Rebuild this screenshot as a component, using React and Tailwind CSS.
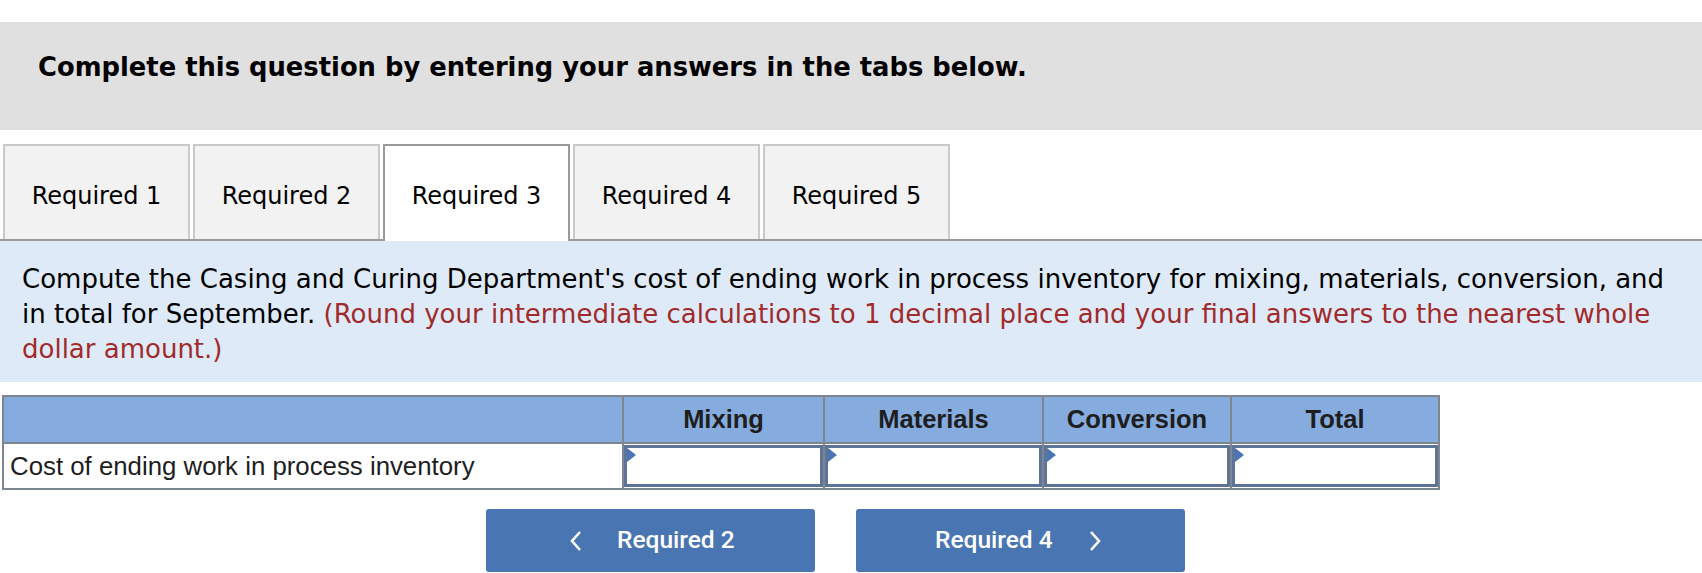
import React from 'react';

const tabs = ['Required 1', 'Required 2', 'Required 3', 'Required 4', 'Required 5'];
const cols = ['Mixing', 'Materials', 'Conversion', 'Total'];
const widths = ['w-[201px]', 'w-[219px]', 'w-[188px]', 'w-[208px]'];

function InputCell({ w }) {
  return (
    <td className={`${w} p-0 border-2 border-[#7d8590]`}>
      <div className="relative h-[42px] border-[3px] border-[#5d7397] bg-white">
        <span className="absolute left-0 top-0 w-0 h-0 border-y-[7px] border-y-transparent border-l-[9px] border-l-[#4a75b3]" />
        <input className="w-full h-full outline-none bg-transparent px-2" />
      </div>
    </td>
  );
}

export default function App() {
  return (
    <div className="w-[1702px] h-[573px] bg-white pt-[22px] font-['DejaVu_Sans',Verdana,sans-serif] overflow-hidden">
      {/* instructions */}
      <div className="h-[108px] bg-[#e0e0e0] pl-[38px] pt-[29px]">
        <h1 className="text-[25.8px] leading-[32px] font-bold text-black">Complete this question by entering your answers in the tabs below.</h1>
      </div>

      {/* tabs */}
      <div className="mt-[14px] flex items-end gap-[3px] pl-[3px] border-b-2 border-[#9a9a9a] h-[97px]">
        {tabs.map((t, i) => (
          <div
            key={t}
            className={`w-[187px] flex items-center justify-center text-[24px] text-black border-2 border-b-0 ${i === 2 ? 'bg-white border-[#9a9a9a] h-[97px] -mb-[2px] pt-[6px] pb-[2px] z-10' : 'bg-[#f2f2f2] border-[#c9c9c9] h-[95px] pt-[6px]'}`}
          >
            {t}
          </div>
        ))}
      </div>

      {/* question */}
      <div className="h-[141px] bg-[#deeaf8] px-[22px] pt-[21px] text-[26px] leading-[35px] text-black">
        Compute the Casing and Curing Department's cost of ending work in process inventory for mixing, materials, conversion, and in total for September.{' '}
        <span className="text-[#a12a2a]">(Round your intermediate calculations to 1 decimal place and your final answers to the nearest whole dollar amount.)</span>
      </div>

      {/* table */}
      <table className="mt-[13px] ml-[2px] border-collapse font-['Liberation_Sans',Arial,sans-serif]">
        <thead>
          <tr className="bg-[#85abdf] h-[47px]">
            <th className="w-[620px] border-2 border-[#7d8590]" />
            {cols.map((c, i) => (
              <th key={c} className={`${widths[i]} border-2 border-[#7d8590] text-[25.5px] font-bold text-[#1e1e1e] text-center`}>{c}</th>
            ))}
          </tr>
        </thead>
        <tbody>
          <tr className="h-[46px]">
            <td className="border-2 border-[#7d8590] text-[25.8px] text-[#1e1e1e] pl-[6px] text-left">Cost of ending work in process inventory</td>
            {widths.map((w, i) => <InputCell key={i} w={w} />)}
          </tr>
        </tbody>
      </table>

      {/* nav buttons */}
      <div className="mt-[19px] flex gap-[41px] pl-[486px] font-['Roboto',sans-serif]">
        <button className="w-[329px] h-[63px] rounded-[3px] bg-[#4a75b3] text-white text-[24.5px] font-medium flex items-center pl-[83px]">
          <svg width="14" height="22" viewBox="0 0 14 22" fill="none" stroke="white" strokeWidth="2.6"><path d="M11 2 L3 11 L11 20" /></svg>
          <span className="ml-[34px]">Required 2</span>
        </button>
        <button className="w-[329px] h-[63px] rounded-[3px] bg-[#4a75b3] text-white text-[24.5px] font-medium flex items-center pl-[79px]">
          <span>Required 4</span>
          <svg className="ml-[35px]" width="14" height="22" viewBox="0 0 14 22" fill="none" stroke="white" strokeWidth="2.6"><path d="M3 2 L11 11 L3 20" /></svg>
        </button>
      </div>
    </div>
  );
}
